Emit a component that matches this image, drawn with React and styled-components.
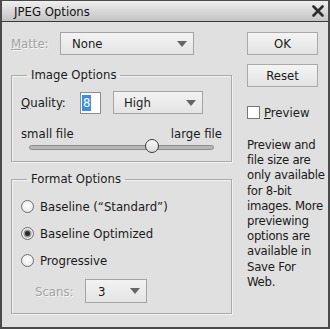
import React from "react";
import styled, { createGlobalStyle } from "styled-components";

const Global = createGlobalStyle`
  html, body { margin: 0; padding: 0; background: #e0e0e0; }
  * { box-sizing: border-box; }
  body { font-family: "DejaVu Sans Condensed", "DejaVu Sans", sans-serif; font-size: 13px; color: #1a1a1a; }
`;

const Window = styled.div`
  width: 330px;
  height: 329px;
  border: 2px solid #4a4a4a;
  border-top-width: 1px;
  background: #e0e0e0;
  display: flex;
  flex-direction: column;
  overflow: hidden;
`;

const TitleBar = styled.div`
  height: 21px;
  flex: none;
  display: flex;
  align-items: center;
  justify-content: space-between;
  padding: 0 4px 0 12px;
  background: linear-gradient(#efefef, #c3c3c3);
  border-bottom: 1px solid #3a3a3a;
  font-size: 13px;
  color: #111;
`;

const CloseIcon = () => (
  <svg width="12" height="12" viewBox="0 0 12 12">
    <path d="M1.5 1.5 L10.5 10.5 M10.5 1.5 L1.5 10.5" stroke="#2e2e2e" strokeWidth="2.6" strokeLinecap="round" />
  </svg>
);

const Body = styled.div`
  display: flex;
  padding: 10px 0 0 9px;
  gap: 15px;
`;

const LeftCol = styled.div`
  width: 221px;
  display: flex;
  flex-direction: column;
`;

const RightCol = styled.div`
  width: 80px;
  display: flex;
  flex-direction: column;
`;

const Row = styled.div`
  display: flex;
  align-items: center;
  height: ${(p) => p.$h || 23}px;
  margin-top: ${(p) => p.$mt || 0}px;
`;

const Label = styled.span`
  width: ${(p) => p.$w}px;
  padding-left: ${(p) => p.$pl || 0}px;
  flex: none;
  color: ${(p) => (p.$disabled ? "#a3a3a3" : "#1a1a1a")};
  text-shadow: ${(p) => (p.$disabled ? "1px 1px 0 #f4f4f4" : "none")};
`;

const U = styled.span`
  text-decoration: underline;
`;

const Select = styled.div`
  width: ${(p) => p.$w}px;
  height: ${(p) => p.$h || 23}px;
  margin-left: ${(p) => p.$ml || 0}px;
  border: 1px solid #a4a4a4;
  background: linear-gradient(#f3f3f3, #e4e4e4);
  display: flex;
  align-items: center;
  justify-content: space-between;
  padding: 0 6px 0 ${(p) => p.$pl || 10}px;
  color: #1a1a1a;
  flex: none;
`;

const Arrow = styled.span`
  width: 0;
  height: 0;
  border-left: 5px solid transparent;
  border-right: 5px solid transparent;
  border-top: 6px solid #666;
`;

const Group = styled.fieldset`
  margin: ${(p) => p.$mt || 0}px 0 0 0;
  border: 1px solid #ababab;
  box-shadow: inset 1px 1px 0 #f2f2f2, 1px 1px 0 #f2f2f2;
  padding: ${(p) => p.$pt}px 9px ${(p) => p.$pb}px 9px;
  min-width: 0;
  display: flex;
  flex-direction: column;
`;

const Legend = styled.legend`
  padding: 0 4px;
  margin-left: 6px;
  line-height: 16px;
  font-size: 13px;
`;

const NumberBox = styled.div`
  width: 21px;
  height: 22px;
  border: 1px solid #8c8c8c;
  background: #fff;
  padding: 2px 1px;
  display: flex;
  flex: none;
`;

const Selected = styled.span`
  background: #3a8ee6;
  color: #fff;
  padding: 0 1px;
  line-height: 16px;
`;

const SliderLabels = styled.div`
  display: flex;
  justify-content: space-between;
  line-height: 15px;
  margin-top: 12px;
`;

const SliderRow = styled.div`
  height: 12px;
  padding: 0 8px;
  display: flex;
  align-items: center;
`;

const Track = styled.div`
  position: relative;
  flex: 1;
  height: 5px;
  border-radius: 3px;
  background: #b6b6b6;
  border: 1px solid #8e8e8e;
`;

const Thumb = styled.div`
  position: absolute;
  top: 50%;
  width: 14px;
  height: 14px;
  margin: -8px 0 0 -7px;
  border-radius: 50%;
  border: 1px solid #3c3c3c;
  background: linear-gradient(#fafafa, #dadada);
`;

const RadioRow = styled.label`
  display: flex;
  align-items: center;
  height: 20px;
  margin-top: ${(p) => p.$mt || 0}px;
  gap: 6px;
`;

const RadioCircle = styled.span`
  width: 13px;
  height: 13px;
  border-radius: 50%;
  border: 1px solid #6e6e6e;
  background: radial-gradient(circle at 50% 40%, #ffffff, #e2e2e2);
  display: flex;
  align-items: center;
  justify-content: center;
  flex: none;
  &::after {
    content: "";
    display: ${(p) => (p.$checked ? "block" : "none")};
    width: 5px;
    height: 5px;
    border-radius: 50%;
    background: #2a2a2a;
    box-shadow: 0 0 0 1.5px #9a9a9a;
  }
`;

const Button = styled.div`
  width: 71px;
  height: 23px;
  border: 1px solid #a9a9a9;
  background: linear-gradient(#f4f4f4, #e3e3e3);
  display: flex;
  align-items: center;
  justify-content: center;
  margin-top: ${(p) => p.$mt || 0}px;
  color: #1a1a1a;
`;

const CheckRow = styled.label`
  display: flex;
  align-items: center;
  gap: 4px;
  height: 14px;
  margin-top: 18px;
`;

const CheckBox = styled.span`
  width: 13px;
  height: 13px;
  border: 1px solid #777;
  background: #fff;
  flex: none;
`;

const Note = styled.p`
  margin: 18px 0 0 0;
  line-height: 15.2px;
  white-space: nowrap;
  letter-spacing: -0.25px;
  color: #1a1a1a;
`;

const noteLines = [
  "Preview and",
  "file size are",
  "only available",
  "for 8-bit",
  "images. More",
  "previewing",
  "options are",
  "available in",
  "Save For",
  "Web.",
];

export default function App() {
  const quality = 8;
  const pct = (quality / 12) * 100;
  return (
    <>
      <Global />
      <Window>
        <TitleBar>
          <span>JPEG Options</span>
          <CloseIcon />
        </TitleBar>
        <Body>
          <LeftCol>
            <Row>
              <Label $w={49} $disabled>
                <U>M</U>atte:
              </Label>
              <Select $w={134} $pl={11}>
                <span>None</span>
                <Arrow />
              </Select>
            </Row>

            <Group $mt={12} $pt={8} $pb={8}>
              <Legend>Image Options</Legend>
              <Row>
                <Label $w={59}>
                  <U>Q</U>uality:
                </Label>
                <NumberBox>
                  <Selected>8</Selected>
                </NumberBox>
                <Select $w={90} $ml={12}>
                  <span>High</span>
                  <Arrow />
                </Select>
              </Row>
              <SliderLabels>
                <span>small file</span>
                <span>large file</span>
              </SliderLabels>
              <SliderRow>
                <Track>
                  <Thumb style={{ left: `${pct}%` }} />
                </Track>
              </SliderRow>
            </Group>

            <Group $mt={9} $pt={9} $pb={10}>
              <Legend>Format Options</Legend>
              <RadioRow>
                <RadioCircle />
                <span>Baseline (“Standard”)</span>
              </RadioRow>
              <RadioRow $mt={7}>
                <RadioCircle $checked />
                <span>Baseline Optimized</span>
              </RadioRow>
              <RadioRow $mt={7}>
                <RadioCircle />
                <span>Progressive</span>
              </RadioRow>
              <Row $h={24} $mt={9}>
                <Label $w={64} $pl={14} $disabled>
                  Scans:
                </Label>
                <Select $w={62} $h={24} $pl={12}>
                  <span>3</span>
                  <Arrow />
                </Select>
              </Row>
            </Group>
          </LeftCol>

          <RightCol>
            <Button>OK</Button>
            <Button $mt={9}>Reset</Button>
            <CheckRow>
              <CheckBox />
              <span>
                <U>P</U>review
              </span>
            </CheckRow>
            <Note>
              {noteLines.map((l, i) => (
                <React.Fragment key={i}>
                  {l}
                  {i < noteLines.length - 1 && <br />}
                </React.Fragment>
              ))}
            </Note>
          </RightCol>
        </Body>
      </Window>
    </>
  );
}
